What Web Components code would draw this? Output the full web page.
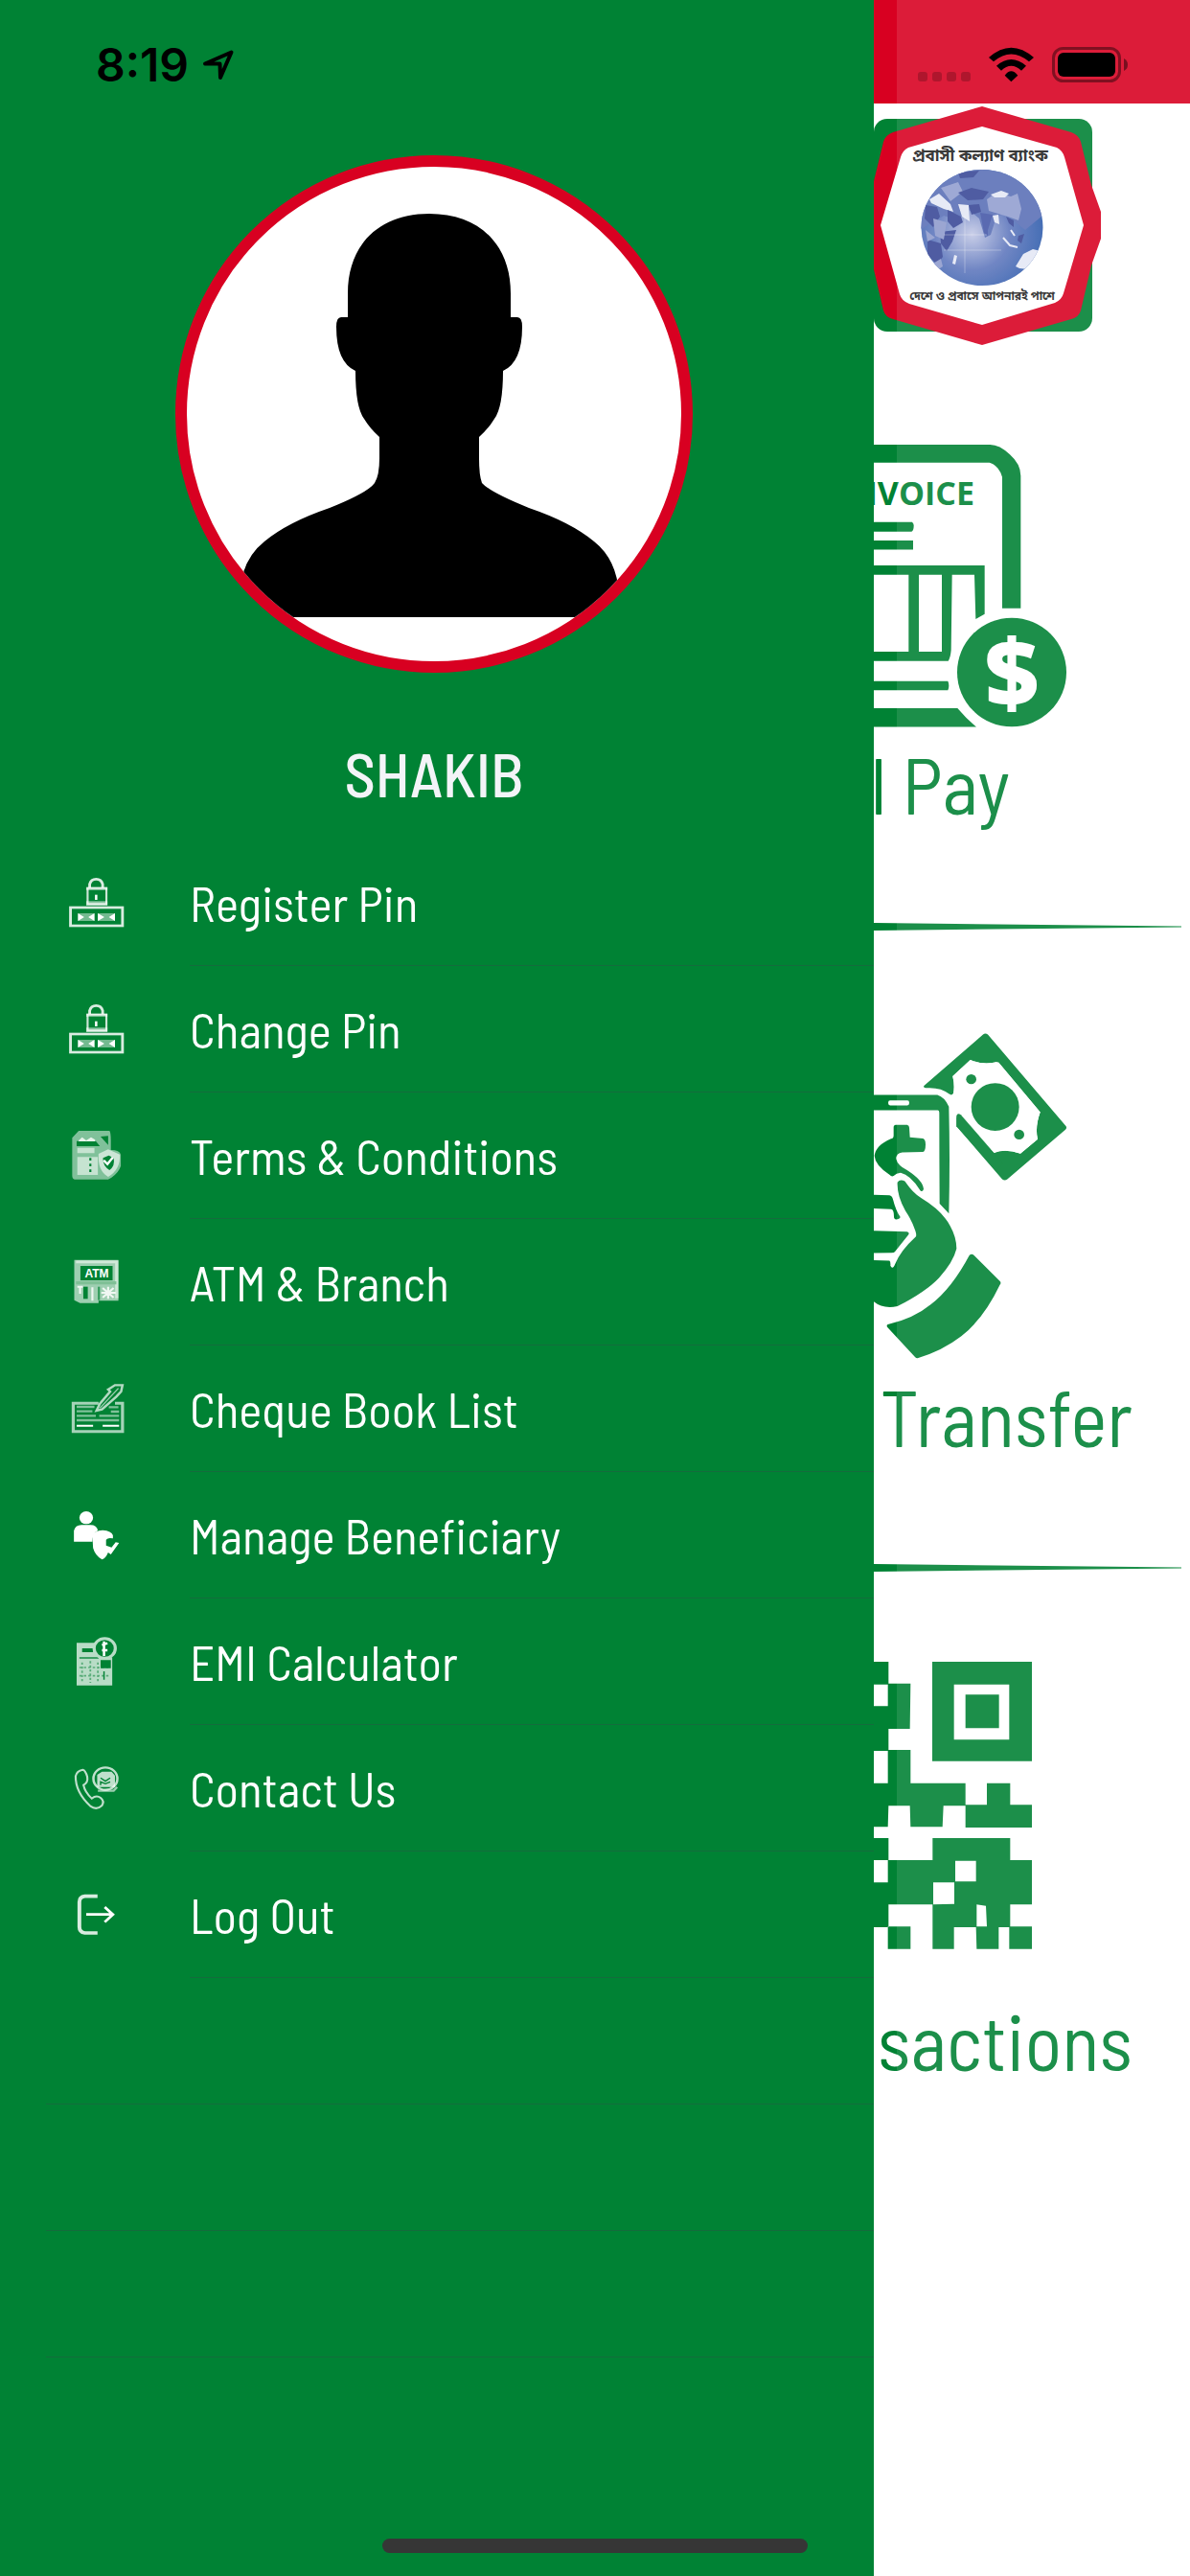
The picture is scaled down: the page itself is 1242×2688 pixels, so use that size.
<!DOCTYPE html>
<html lang="en">
<head>
<meta charset="utf-8">
<meta name="viewport" content="width=device-width, initial-scale=1">
<title>Probashi Kallyan Bank</title>
<style>
  html, body { margin: 0; background: #fff; }
  body { font-family: "Barlow Semi Condensed", "Roboto Condensed", "Liberation Sans Narrow", Roboto, sans-serif; }
</style>
</head>
<body>
<bank-app>
  <nav-drawer slot="drawer">
    <status-time slot="status">8:19</status-time>
    <user-profile slot="profile">SHAKIB</user-profile>
    <menu-item icon="pin" top="909">Register Pin</menu-item>
    <menu-item icon="pin" top="909">Change Pin</menu-item>
    <menu-item icon="terms" top="1173">Terms &amp; Conditions</menu-item>
    <menu-item icon="atm" top="1305">ATM &amp; Branch</menu-item>
    <menu-item icon="cheque" top="1437">Cheque Book List</menu-item>
    <menu-item icon="people" top="1569">Manage Beneficiary</menu-item>
    <menu-item icon="emi" top="1701">EMI Calculator</menu-item>
    <menu-item icon="contact" top="1833">Contact Us</menu-item>
    <menu-item icon="logout" top="1965">Log Out</menu-item>
  </nav-drawer>
  <status-icons slot="page"></status-icons>
  <bank-logo slot="page"></bank-logo>
  <service-tile slot="page" art="invoice" class="short">Bill Pay</service-tile>
  <service-tile slot="page" art="transfer">Transfer</service-tile>
  <service-tile slot="page" art="qr">Transactions</service-tile>
</bank-app>

<script>
const define = (name, html) => customElements.define(name, class extends HTMLElement {
  connectedCallback() {
    if (this.shadowRoot) return;
    this.attachShadow({ mode: 'open' }).innerHTML = typeof html === 'function' ? html(this) : html;
  }
});

define('bank-app', `
<style>
  :host { display: grid; grid-template-columns: 912fr 330fr; min-height: 100vh; position: relative; background: #fff; }
  main { position: relative; min-width: 0; overflow: hidden; display: flex; flex-direction: column; }
  /* light veil that the open drawer lays over the page behind it */
  .veil { position: absolute; inset: 0 0 0 24px; background: rgba(255,255,255,.11); pointer-events: none; }
  .home { position: absolute; left: 50%; bottom: 24px; width: 444px; height: 15px; margin-left: -222px; border-radius: 8px; background: #363636; }
</style>
<slot name="drawer"></slot>
<main><slot name="page"></slot><div class="veil"></div></main>
<div class="home"></div>`);

define('nav-drawer', `
<style>
  :host { display: flex; flex-direction: column; background: #008234; min-width: 0; }
  nav { display: flex; flex-direction: column; }
  .blank { height: 131px; margin-left: 48px; border-bottom: 1px solid #146c3c; }
</style>
<slot name="status"></slot>
<slot name="profile"></slot>
<nav aria-label="Main menu"><slot></slot></nav>
<div class="blank"></div><div class="blank"></div><div class="blank"></div>`);

define('status-time', `
<style>
  :host { display: flex; align-items: center; gap: 14px; box-sizing: border-box; height: 108px; padding: 28px 0 0 100px; margin-bottom: 54px;
    font: 600 48px/58px Inter, sans-serif; color: #000; }
  svg { display: block; }
</style>
<span><slot></slot></span>
<svg width="34" height="34" viewBox="210 51 34 34" fill="none" stroke="#000" stroke-width="4" stroke-linejoin="round"><path d="M240.500 54.500 213 66.500 228.500 66.500 229 81Z"/></svg>`);

define('user-profile', `
<style>
  :host { display: flex; flex-direction: column; align-items: center; padding: 0 6px 32px 0; gap: 70px; }
  .avatar { box-sizing: border-box; width: 540px; height: 540px; border: 12px solid #d80021; border-radius: 50%; overflow: hidden; background: #fff; }
  svg { display: block; width: 100%; height: 100%; }
  h1 { margin: 0; font-size: 64px; line-height: 70px; padding-bottom: 2px; font-weight: 500; color: #f3f4f8; }
</style>
<div class="avatar"><svg viewBox="195 174 516 516" role="img" aria-label="Profile picture">
<path d="M448 223C395 223 363 256 363 306V331H356Q351 331 351 341Q351 378 371 387Q371 425 380 437 386 447 396 456V478Q396 496 391 504 384 514 344 530 300 545 276 565 252 584 250 620V644H646V620Q644 584 620 565 596 545 552 530 512 514 503 504 500 496 500 478V456Q510 447 516 437 525 425 525 387 545 378 545 341 545 331 540 331H533V306C533 256 501 223 448 223Z"/></svg></div>
<h1><slot></slot></h1>`);

const menuArt = {
  pin: `<g transform="translate(50 890) scale(.35714 .33333)" fill="none" stroke="#fff">
    <path d="M122 108V98Q126 82 141 82T160 98V108" stroke-width="8" opacity=".85"/>
    <rect x="116" y="110" width="55" height="50" stroke-width="6" opacity=".8"/><path d="M112 112H174" stroke-width="9" opacity=".55"/>
    <path d="M112 158H174" stroke-width="14" opacity=".55"/><path d="M141 131V147" stroke-width="7"/>
    <rect x="66" y="171" width="152" height="57" stroke-width="8" opacity=".85"/>
    <path d="M88 189H136V213H88ZM146 189H196V213H146Z" fill="#fff" stroke="none" opacity=".45"/>
    <path d="M88 189 106 201 88 213ZM136 189 118 201 136 213ZM146 189 165 201 146 213ZM196 189 178 201 196 213Z" fill="#fff" stroke="none"/></g>`,
  terms: `<g transform="translate(50 890) scale(.35714 .33333)" fill="#fff">
    <path d="M71 892 90 870H180Q184 875 184 900V930Q210 930 213 945V980Q207 1000 186 1016L176 1022H78Q71 1020 71 1010Z" opacity=".5"/>
    <path d="M86 952H146V1008H86ZM86 923H136V940H86Z" opacity=".55"/>
    <path d="M84 902H140L152 918H84Z" fill="#008234"/><path d="M90 900 100 890 112 900 126 890 138 898V903H90Z" fill="#e8f4ec"/>
    <path d="M154 888 176 886V914Z" fill="#008234"/>
    <path d="M148 942 176 928 210 944Q213 990 176 1014 145 995 148 942Z" opacity=".6"/>
    <path d="M161 955 178 947 192 955Q197 980 180 993 160 980 161 955Z" fill="#008234"/><path d="M163 962 174 974 190 953" fill="none" stroke="#fff" stroke-width="7"/>
    <path d="M124 955V1005" stroke="#008234" stroke-width="6" stroke-dasharray="8 10"/></g>`,
  atm: `<g transform="translate(50 1250) scale(.35714 .33333)">
    <path d="M77 194H206V322H148V329H94L77 320Z" fill="#fff" opacity=".62"/><path d="M82 200H201V314" fill="none" stroke="#cfe8d8" stroke-width="9"/>
    <rect x="95" y="213" width="94" height="45" fill="#008234"/>
    <path d="M82 266H200" stroke="#7fc096" stroke-width="10"/>
    <path d="M110 278V316" stroke="#008234" stroke-width="13"/><path d="M149 278V320" stroke="#2f9a5a" stroke-width="6"/>
    <path d="M86 278H102M94 280V300M130 280V322M160 282 192 312M192 282 160 312M176 278V316M156 297H198" stroke="#fff" stroke-width="6" opacity=".85"/></g>
    <text x="101" y="1332.500" text-anchor="middle" font-family="Liberation Sans, sans-serif" font-weight="700" font-size="12" fill="#fff">ATM</text>`,
  cheque: `<g transform="translate(50 1250) scale(.35714 .33333)" fill="none" stroke="#fff">
    <path d="M148 643H74V731H218V643H196" stroke-width="9" opacity=".65"/>
    <path d="M84 654H136M84 668H130M84 682H140M150 682H208M84 696H208M178 655H206M184 669H208" stroke-width="7" opacity=".5"/>
    <path d="M84 713H132M160 713H208" stroke-width="6"/><path d="M142 666 152 644 182 606 176 600 196 586H218L214 606 200 622 158 662Z" stroke-width="7" opacity=".7"/>
    <path d="M152 658 206 596" stroke-width="4" opacity=".6"/></g>`,
  people: `<g transform="translate(50 1250) scale(.35714 .33333)" fill="#fff">
    <circle cx="112" cy="1001" r="20"/><path d="M76 1076V1042Q80 1023 100 1024H124Q143 1024 146 1041 130 1050 130 1076Z"/>
    <path d="M130 1058Q136 1040 160 1040 186 1042 190 1056V1066Q176 1062 170 1070V1088L186 1094 198 1078 208 1080 184 1116 176 1110Q168 1130 158 1132 138 1120 132 1096Z"/></g>`,
  emi: `<g transform="translate(50 1650) scale(.35714 .33333)">
    <path d="M84 193H142L150 238H188V326H84Z" fill="#fff" opacity=".72"/><path d="M100 210H132V222H100Z" fill="#008234"/>
    <path d="M92 240H148" stroke="#008234" stroke-width="4"/>
    <path d="M100 254V318M124 250V318M146 254V318M92 270H182M92 296H182" stroke="#59ac79" stroke-width="5" stroke-dasharray="7 6"/>
    <path d="M156 249H182V270H156ZM164 282V308" stroke="#008234" stroke-width="4" fill="#008234"/>
    <circle cx="166" cy="210" r="31" fill="#008234" stroke="#b9ddc7" stroke-width="9"/><path d="M164 188V234M158 200 174 194M158 216H174" stroke="#fff" stroke-width="7"/></g>`,
  contact: `<g transform="translate(50 1650) scale(.35714 .33333)" fill="none" stroke="#fff">
    <path d="M102 590Q84 594 81 610 80 660 124 704 142 718 158 702 166 688 154 678 142 668 128 680 108 660 104 638 118 630 115 612 110 592 102 590Z" stroke-width="6" opacity=".75"/>
    <circle cx="168" cy="618" r="35" stroke-width="7" opacity=".75"/>
    <path d="M144 606 158 596H186L196 608V644H144Z" fill="#fff" stroke="none" opacity=".75"/><path d="M154 616 168 626 182 616M154 638V628L168 634 182 628" stroke="#008234" stroke-width="4"/>
    <path d="M146 656H192L202 644" stroke-width="7" opacity=".6"/></g>`,
  logout: `<g transform="translate(50 1650) scale(.35714 .33333)" fill="none" stroke="#fff">
    <path d="M145 986H108Q92 988 92 1004V1082Q92 1098 108 1101H145" stroke-width="11" opacity=".85"/>
    <path d="M112 1043H192M166 1020 190 1043 166 1067" stroke-width="8"/></g>`
};

define('menu-item', el => `
<style>
  :host { display: block; }
  a { display: flex; align-items: center; height: 132px; padding-left: 70px; color: #fff; text-decoration: none; }
  svg { flex: none; width: 62px; height: 66px; margin-right: 66px; }
  span { flex: 1; display: flex; align-items: center; height: 131px; font-size: 51px; border-bottom: 1px solid #146c3c; white-space: nowrap; }
</style>
<a href="#${el.getAttribute('icon')}"><svg viewBox="70 ${el.getAttribute('top')} 62 66" aria-hidden="true">${menuArt[el.getAttribute('icon')]}</svg><span><slot></slot></span></a>`);

define('status-icons', `
<style>
  :host { display: block; background: #d80021; height: 108px; }
  svg { display: block; position: relative; z-index: 1; width: 330px; height: 108px; }
</style>
<svg viewBox="912 0 330 108" aria-label="Wi-Fi on, battery full">
  <g fill="#000" opacity=".2"><rect x="958" y="75" width="10" height="10" rx="3"/><rect x="973" y="75" width="10" height="10" rx="3"/><rect x="988" y="75" width="10" height="10" rx="3"/><rect x="1003" y="75" width="10" height="10" rx="3"/></g>
  <g transform="translate(900 0) scale(.33333)"><path d="M396 180Q466 118 537 180L522 193Q466 146 411 193ZM420 206Q466 166 513 206L498 221Q466 191 435 221ZM446 236Q466 210 487 236L466 256Z"/></g>
  <rect x="1099.500" y="50.500" width="69" height="34" rx="10" fill="none" stroke="#000" stroke-width="3" opacity=".42"/>
  <rect x="1104" y="55" width="60" height="25" rx="6"/><path d="M1173 61Q1177 63 1177 67.500T1173 74Z" opacity=".45"/>
</svg>`);

define('bank-logo', `
<style>:host { display: block; } svg { display: block; width: 100%; height: auto; }</style>
<svg viewBox="912 108 330 292" role="img" aria-label="Probashi Kallyan Bank">
  <defs><radialGradient id="sea" cx=".42" cy=".55" r=".6"><stop offset="0" stop-color="#c3c9e6"/><stop offset=".5" stop-color="#6078bd"/><stop offset="1" stop-color="#2a5aab"/></radialGradient>
  <clipPath id="globe"><ellipse cx="1025" cy="237.500" rx="63.500" ry="60.500"/></clipPath><clipPath id="edge"><rect x="900" y="108" width="249" height="260"/></clipPath></defs>
  <rect x="912" y="124" width="228" height="222" rx="14" fill="#008234"/>
  <path clip-path="url(#edge)" fill="#d80021" d="M1025 111 1118 138Q1126 141 1128 148L1139 193 1154 235 1139 277 1128 324Q1126 331 1118 333L1025 360 932 333Q924 331 922 324L911 277 896 235 911 193 922 148Q924 141 932 138Z"/>
  <path fill="#fff" d="M1025 132 1103 154Q1109 157 1111 164L1131 235 1110 306Q1108 313 1101 316L1025 339 949 317Q941 314 939 307L919 235 940 164Q942 157 948 154Z"/>
  <g clip-path="url(#globe)"><rect x="960" y="176" width="130" height="124" fill="url(#sea)"/>
    <path fill="#5a70b6" d="M961 176H1080L1088 225 1070 240 1060 232 1050 222 1040 226 1034 245 1028 248 1022 228 1010 218 1000 230 985 225 960 240Z"/>
    <path fill="#929fd0" d="M1030 208 1040 201 1055 205 1062 202 1066 218 1063 230 1052 226 1045 224 1032 220ZM982 196 1000 190 1005 200 992 210Z"/>
    <path fill="#e4e8f5" d="M1034 203 1045 199 1053 202 1049 206H1038ZM970 208 980 202 992 213 995 221 985 218 972 212ZM1000 213 1011 214 1012 231 1004 226ZM1036 225 1042 224 1043 234 1038 232ZM1060 278 1068 265 1078 260 1086 262 1082 282 1064 280ZM996 266 999 267 997 276 994 275Z"/>
    <path fill="#3a4897" d="M1000 201 1014 196 1032 200 1026 208 1010 209ZM989 219 1003 226 1005 232 995 238 989 231ZM1011 214 1022 213 1024 221 1014 224ZM966 214 978 216 981 226 974 237 965 228ZM981 242 998 240 994 252 988 262 982 254ZM968 250 982 254 984 268 978 276 968 266ZM1000 180 1022 178 1016 185 1002 186ZM1050 226 1058 230 1058 237 1053 233ZM1063 246 1069 244 1066 254 1062 251Z"/>
    <path fill="#8f9ccd" d="M974 228 988 232 985 250 976 246ZM966 240 976 248 968 252ZM982 270 984 278 978 282 972 276Z"/><path fill="#4658a8" d="M1023 222 1036 224 1031 240 1031 246 1027 243Z"/>
    <path fill="none" stroke="#e4e8f5" stroke-width="2" d="M1047 248 1054 256 1062 258M1055 240 1059 246"/>
    <path fill="none" stroke="#fff" opacity=".3" d="M1007 225V285M985 245H1030M985 261H1045"/></g>
  <g font-family="Noto Sans Bengali, Noto Serif Bengali, Lohit Bengali, FreeSans, sans-serif" font-weight="700" fill="#222" text-anchor="middle">
    <text x="1023" y="168" font-size="17">প্রবাসী কল্যাণ ব্যাংক</text><text x="1025" y="313" font-size="12">দেশে ও প্রবাসে আপনারই পাশে</text></g>
</svg>`);

const tileArt = {
  invoice: `<svg viewBox="912 400 330 374" aria-hidden="true"><g transform="translate(900 440) scale(.33333 .35714)">
    <path d="M0 67H400Q430 67 462 96 496 124 496 158V545H438V162Q436 150 424 136 410 122 398 120H0ZM0 293H156Q162 298 161 305 161 318 154 321H0ZM0 347H159V374H0ZM0 420H383V562L355 577 351 447H281L278 668Q276 690 269 699H0V672H145V447H0ZM177 447V672H249V447ZM0 758H268Q274 771 268 785H0ZM0 837H298Q325 867 357 892H0Z" fill-rule="evenodd"/>
    <ellipse cx="468" cy="732" rx="171" ry="159"/></g>
    <text x="1017" y="527" text-anchor="end" font-family="Open Sans, sans-serif" font-weight="700" font-size="34">INVOICE</text>
    <text x="1056" y="737" text-anchor="middle" font-family="Open Sans, sans-serif" font-weight="800" font-size="98" fill="#fff">$</text></svg>`,
  transfer: `<svg viewBox="912 870 330 564" aria-hidden="true"><path d="M912 963 1233 966.500V967.500L912 971Z"/><g transform="translate(900 1040) scale(.33333 .3954)">
    <path d="M193 235 378 100Q385 95 393 100L638 342Q641 347 636 351L454 482Q446 487 438 482L295 342V315Q298 305 308 312L412 412Q448 400 495 414L549 376Q540 345 557 305L427 174Q418 171 412 174 375 180 338 167L283 210Q290 235 285 255 280 262 272 257 245 238 198 241 190 239 193 235Z"/>
    <path d="M413 412 295 300V318ZM311 305 412 412Q448 400 495 414L549 376Q540 345 557 305L427 174Q418 171 412 174 375 180 338 167L283 210Q290 235 285 257L296 310Z" fill="#fff"/>
    <path d="M295 342V315Q298 305 308 312L412 412 440 440 420 460Z"/>
    <ellipse cx="416" cy="291" rx="75" ry="63"/><ellipse cx="341" cy="218" rx="16" ry="13"/><ellipse cx="491" cy="364" rx="16" ry="13"/>
    <path d="M0 259H235Q258 265 271 290 275 430 271 572L242 546Q241 425 241 308 241 300 236 300H0Z"/><rect x="81" y="274" width="66" height="13" rx="6" fill="#fff"/>
    <path d="M98 345Q98 338 105 338H140Q147 339 147 346L149 371 190 374Q198 376 198 390 198 410 188 410L125 411Q106 413 106 428 110 445 140 458 190 485 192 508 190 516 182 512 150 470 120 465 106 466 98 473 92 476 85 470 40 445 38 420 42 392 90 375 98 374 98 366Z"/>
    <path d="M0 522 85 524Q93 525 96 535 105 565 119 582 117 588 105 588 99 588 99 580 99 562 90 561L0 558ZM0 617 140 620Q150 622 143 630L103 672Q100 676 92 676L0 677Z"/>
    <path d="M0 694 85 697Q89 699 88 710 95 722 103 705 120 670 168 633 170 628 166 618 155 590 135 565 108 525 110 490 118 480 133 487 160 520 185 532 250 565 275 605 295 635 295 665 285 700 240 742 200 778 110 817 65 825 36 805L0 790Z"/>
    <path d="M80 865Q160 850 215 812 280 770 335 683 342 676 350 683L432 752Q435 756 431 760 380 850 310 896 250 935 173 954 168 954 165 951L78 872Q75 867 80 865Z"/></g></svg>`,
  qr: `<svg viewBox="912 1530 330 555" aria-hidden="true"><path d="M912 1632 1233 1635.500V1636.500L912 1640Z"/><g transform="translate(900 1700) scale(.33333)">
    <path d="M36 102H82V170H151L149 312H82V378H151V482H323V553H254L251 619H151L149 553H82L80 619H36V482H80V381H36V241H80V173H36ZM390 482H463V550H531V621H323V550H390ZM36 654H82V723H220V654H463V723H531V862H463V931H531V1001H460V933H427V1001H358L356 933H287V1001H220V862H82V933H36V793H80V723H36ZM80 931H151V1001H80ZM291 725V790H356V725ZM222 793V862L288 860V793ZM358 862V931H390L387 866Z" fill-rule="evenodd"/>
    <path d="M219 102H531V413H219ZM287 173V346H460V173ZM323 205H428V310H323Z" fill-rule="evenodd"/></g></svg>`
};

define('service-tile', el => `
<style>
  :host { display: flex; flex-direction: column; color: #008234; --end: 60px; }
  :host(.short) { --end: 188px; }
  svg { display: block; width: 100%; height: auto; fill: currentColor; }
  a { display: flex; flex-direction: column; color: inherit; text-decoration: none; }
  .label { display: flex; justify-content: flex-end; padding: 0 var(--end) 8px 0; font-size: 81px; line-height: 88px; white-space: nowrap; }
</style>
<a href="#${el.getAttribute('art')}">${tileArt[el.getAttribute('art')]}<span class="label"><slot></slot></span></a>`);
</script>
</body>
</html>
